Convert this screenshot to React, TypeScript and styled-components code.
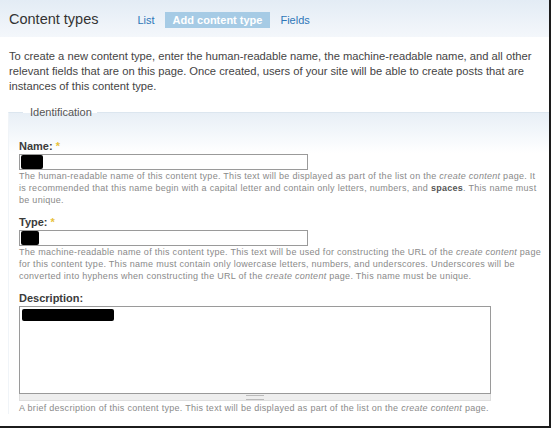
import styled, { createGlobalStyle } from "styled-components";

const GlobalStyle = createGlobalStyle`
    html, body {
        margin: 0;
        padding: 0;
        background: #fff;
    }
`;

const Frame = styled("div")`
    width: 551px;
    height: 428px;
    box-sizing: border-box;
    border-right: 2px solid #1c1c1c;
    border-bottom: 2px solid #1c1c1c;
    overflow: hidden;
    font-family: "Liberation Sans", Arial, sans-serif;
    color: #444;
    background: #fff;
`;

const Header = styled("div")`
    height: 37px;
    display: flex;
    align-items: center;
    padding: 0 0 0 9px;
    background: linear-gradient(#e3ecf5, #f4f7fb);
`;

const Title = styled("h1")`
    margin: 0 39px 0 0;
    font-size: 14.5px;
    font-weight: normal;
    color: #333;
`;

const Tabs = styled("ul")`
    display: flex;
    align-items: center;
    gap: 10px;
    margin: 0;
    padding: 0;
    list-style: none;
`;

const Tab = styled("li")<{ $active?: boolean }>`
    font-size: 11px;
    line-height: 16px;
    padding: 0 ${(p) => (p.$active ? "8px" : "0")};
    margin-top: 3px;
    color: ${(p) => (p.$active ? "#fff" : "#2e76b8")};
    background: ${(p) => (p.$active ? "#a6cbe5" : "transparent")};
    font-weight: ${(p) => (p.$active ? "bold" : "normal")};
`;

const Intro = styled("p")`
    margin: 12px 14px 0 9px;
    font-size: 11.2px;
    line-height: 15px;
    color: #444;
`;

const Fieldset = styled("fieldset")`
    margin: 12px -20px 0 8px;
    padding: 0 0 0 10px;
    border: none;
    border-top: 1px solid #dce6ef;
    border-left: 1px solid #f0f4f8;
    background: linear-gradient(#e8eff6 0px, #f6f9fc 25px, #fff 40px);
`;

const Legend = styled("legend")`
    margin-left: 4px;
    padding: 0 5px 0 7px;
    font-size: 11px;
    color: #555;
`;

const Field = styled("div")`
    margin-top: 9px;
    &:first-of-type {
        margin-top: 21px;
    }
`;

const Label = styled("label")`
    display: block;
    font-size: 11px;
    font-weight: bold;
    color: #3b3b3b;
    line-height: 15px;
    margin-bottom: 0;
`;

const Required = styled("span")`
    color: #e8c13a;
    margin-left: 3px;
`;

const Input = styled("div")`
    position: relative;
    width: 289px;
    height: 16px;
    box-sizing: border-box;
    border: 1px solid #9a9a9a;
    background: #fff;
`;

const Redact = styled("span")<{ $w: number }>`
    position: absolute;
    left: 1px;
    top: 0px;
    width: ${(p) => p.$w}px;
    height: 14px;
    background: #000;
    border-radius: 2px;
`;

const Help = styled("div")<{ $gap?: number }>`
    width: 524px;
    font-size: 9px;
    line-height: 12px;
    color: #8a8a8a;
    margin-top: ${(p) => p.$gap ?? 0}px;
    letter-spacing: 0.28px;
    em {
        font-style: italic;
    }
    strong {
        color: #555;
    }
`;

const TextArea = styled("div")`
    position: relative;
    width: 472px;
    height: 88px;
    box-sizing: border-box;
    border: 1px solid #9a9a9a;
    background: #fff;
`;

const Grip = styled("div")`
    width: 472px;
    height: 7px;
    box-sizing: border-box;
    background: #eeeeee;
    border: 1px solid #dedede;
    border-top: none;
    display: flex;
    justify-content: center;
    align-items: center;
    &::after {
        content: "";
        width: 18px;
        height: 3px;
        border-top: 1px solid #bbb;
        border-bottom: 1px solid #bbb;
    }
`;

export default function App() {
    return (
        <>
            <GlobalStyle />
            <Frame>
                <Header>
                    <Title>Content types</Title>
                    <Tabs>
                        <Tab>List</Tab>
                        <Tab $active>Add content type</Tab>
                        <Tab>Fields</Tab>
                    </Tabs>
                </Header>
                <Intro>
                    To create a new content type, enter the human-readable name, the machine-readable name, and all other
                    relevant fields that are on this page. Once created, users of your site will be able to create posts that are
                    instances of this content type.
                </Intro>
                <Fieldset>
                    <Legend>Identification</Legend>
                    <Field>
                        <Label>
                            Name:<Required>*</Required>
                        </Label>
                        <Input>
                            <Redact $w={22} />
                        </Input>
                        <Help>
                            The human-readable name of this content type. This text will be displayed as part of the list on the{" "}
                            <em>create content</em> page. It is recommended that this name begin with a capital letter and contain
                            only letters, numbers, and <strong>spaces</strong>. This name must be unique.
                        </Help>
                    </Field>
                    <Field>
                        <Label>
                            Type:<Required>*</Required>
                        </Label>
                        <Input>
                            <Redact $w={18} />
                        </Input>
                        <Help>
                            The machine-readable name of this content type. This text will be used for constructing the URL of the{" "}
                            <em>create content</em> page for this content type. This name must contain only lowercase letters,
                            numbers, and underscores. Underscores will be converted into hyphens when constructing the URL of the{" "}
                            <em>create content</em> page. This name must be unique.
                        </Help>
                    </Field>
                    <Field>
                        <Label>Description:</Label>
                        <TextArea>
                            <Redact $w={92} style={{ top: 2, height: 12, left: 2 }} />
                        </TextArea>
                        <Grip />
                        <Help $gap={1}>
                            A brief description of this content type. This text will be displayed as part of the list on the{" "}
                            <em>create content</em> page.
                        </Help>
                    </Field>
                </Fieldset>
            </Frame>
        </>
    );
}
